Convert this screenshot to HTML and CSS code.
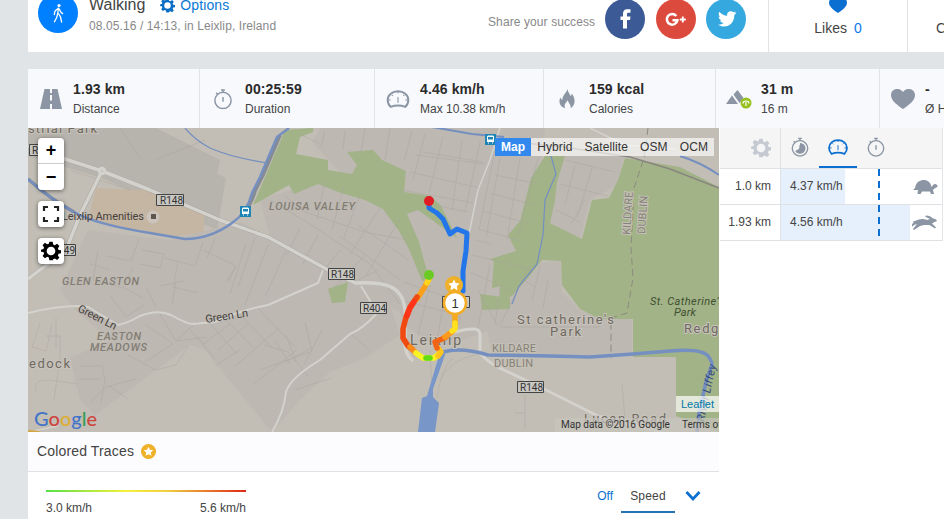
FILE: index.html
```html
<!DOCTYPE html>
<html lang="en">
<head>
    <meta charset="UTF-8">
    <meta name="viewport" content="width=device-width, initial-scale=1.0">
    <title>Walking in Leixlip</title>
    <link rel="stylesheet" href="styles.css">
</head>
<body>
    <svg class="defs">
        <symbol id="gear" viewBox="0 0 24 24"><path fill-rule="evenodd" d="M10 1h4l.6 3.2 2 .8 2.7-1.8 2.8 2.8-1.8 2.7.8 2 3.2.6v3.4l-3.2.6-.8 2 1.8 2.7-2.8 2.8-2.7-1.8-2 .8L14 23h-4l-.6-3.2-2-.8-2.7 1.8L1.900 18l1.800-2.700-.8-2L-.2 12.900V10.600l3.100-.9.800-2L1.900 5l2.800-2.800L7.400 4l2-.8zM12 6.800a5.200 5.200 0 1 0 0 10.400 5.200 5.200 0 0 0 0-10.400z"/></symbol>
        <symbol id="watch" viewBox="0 0 20 22"><g fill="none" stroke="currentColor" stroke-width="1.500"><circle cx="10" cy="12.500" r="8.500"/><path d="M10 4V1.500M8 1.500h4M3 4.500l1.500 1.700M10 9v5"/></g></symbol>
        <symbol id="meter" viewBox="0 0 24 20"><path d="M5 17.500C1 13.500 1.500 8 5 5c4-3.300 10-3.300 14 0 3.500 3 4 8.500 0 12.500-4-1.500-10-1.500-14 0z" fill="none" stroke="currentColor" stroke-width="1.900"/><path d="M12 8v5.500M12 3v1.500M3 11h2M19 11h2M6 6l1 1M18 6l-1 1" fill="none" stroke="currentColor"/></symbol>
        <symbol id="heart" viewBox="0 0 24 21"><path d="M12 20.500C7 17 0 12.500 0 6.500 0 .5 8-2 12 3.500 16-2 24 .5 24 6.500c0 6-7 10.500-12 14z"/></symbol>
        <symbol id="star" viewBox="0 0 20 20"><circle cx="10" cy="10" r="10" fill="#efb02a"/><path d="M10 3.800l1.900 4 4.400.5-3.200 3 .8 4.400-3.900-2.200-3.900 2.200.8-4.400-3.200-3 4.400-.5z" fill="#fff"/></symbol>
    </svg>

    <div class="page">
        <header>
            <div class="activity">
                <svg class="walk" viewBox="0 0 40 40"><circle cx="20" cy="20" r="20" fill="#0080ff"/><circle cx="21" cy="12.500" r="1.600" fill="#fff"/><path d="M20.500 14.500l-.8 6.500M20 15.500l-3 2.500-.8 4M21 15.500l1.800 3.500 2.200 2M19.700 20.500l-1 4-2.500 4.800M20.500 20.500l2 3.500 1.200 5.500" fill="none" stroke="#fff" stroke-width="1.300"/></svg>
                <div class="info">
                    <div class="title"><span>Walking</span><svg><use href="#gear"/></svg><a href="#">Options</a></div>
                    <p>08.05.16 / 14:13, in Leixlip, Ireland</p>
                </div>
                <div class="share">
                    <span>Share your success</span>
                    <svg viewBox="0 0 40 40"><circle cx="20" cy="20" r="20" fill="#3c5a96"/><path d="M18 29.500V21h-2.500v-3.500H18V15c0-3.500 2-4.800 4.500-4.800h3v3.500h-2c-1.200 0-1.500.6-1.500 1.600v2.200h3.500L25 21h-3v8.500z" fill="#fff"/></svg>
                    <svg viewBox="0 0 40 40"><circle cx="20" cy="20" r="20" fill="#db4a3c"/><path d="M20.300 17a5.300 5.300 0 1 0 1.100 4.200H16.500" fill="none" stroke="#fff" stroke-width="2.500"/><path d="M26.800 17.500v6M23.800 20.500h6" stroke="#fff" stroke-width="1.800"/></svg>
                    <svg viewBox="0 0 40 40"><circle cx="20" cy="20" r="20" fill="#35a8e0"/><path d="M30.500 13.800c-.8.4-1.400.5-2.200.6.800-.5 1.300-1.100 1.600-2-.8.4-1.500.7-2.400.9-2.800-2.700-7.100-.2-6.300 3.500-3.300-.2-6-1.600-8-4-1 2-.5 4 1.200 5.200-.6 0-1.200-.2-1.700-.5 0 2 1.200 3.400 3 3.900-.6.2-1.100.2-1.700.1.500 1.500 1.900 2.500 3.600 2.600-1.600 1.300-3.500 1.800-5.600 1.600 7.500 4.500 16.500.2 16.300-9.700.9-.6 1.600-1.300 2.200-2.200z" fill="#fff"/></svg>
                </div>
            </div>
            <div class="likes">
                <svg><use href="#heart"/></svg>
                <p>Likes <span>0</span></p>
            </div>
            <div class="comments">Comments</div>
        </header>

        <section class="stats">
            <div class="stat">
                <svg viewBox="0 0 26 24"><path d="M6.500 2H12v4h2V2h5.500L24 22H14v-5h-2v5H2zM12 8v5.500h2V8z"/></svg>
                <div><b>1.93 km</b><span>Distance</span></div>
            </div>
            <div class="stat">
                <svg class="line"><use href="#watch"/></svg>
                <div><b>00:25:59</b><span>Duration</span></div>
            </div>
            <div class="stat">
                <svg class="line"><use href="#meter"/></svg>
                <div><b>4.46 km/h</b><span>Max 10.38 km/h</span></div>
            </div>
            <div class="stat">
                <svg viewBox="0 0 26 24"><path fill-rule="evenodd" d="M13.500 2c.5 4 2.500 4.500 3 7 1-.7 1.200-1.500 1.200-2.500 4.500 5.500 3.500 12-1 14.800.6-4-2.600-5-2.900-8.300-1.200 2.500-4.500 4.300-2.600 8.300C5.500 19.500 4.500 14.500 6.300 10.500c.6 1.200 1 1.800 2 2.500C8.500 8 11.800 7 13.500 2z"/></svg>
                <div><b>159 kcal</b><span>Calories</span></div>
            </div>
            <div class="stat">
                <svg viewBox="0 0 26 24"><path d="M0 17l6-8.500L12 17zM7.500 7.500l4-4.500 6 8-4 5z"/><circle cx="20" cy="16" r="5.500" fill="#97c11f"/><path d="M17 16.500a3 2.500 0 0 1 6 0M20 19v-4" fill="none" stroke="#fff" stroke-width="1.200"/></svg>
                <div><b>31 m</b><span>16 m</span></div>
            </div>
            <div class="stat">
                <svg class="line"><use href="#heart"/></svg>
                <div><b>-</b><span>Ø Heart rate</span></div>
            </div>
        </section>

        <main>
            <div class="left">
                <div class="map">
                    <svg class="tiles" viewBox="28 128 691 304">
                        <rect x="28" y="128" width="691" height="304" fill="#c2beb5"/>
                        <!-- built-up areas -->
                        <g fill="#bdb8b2">
                            <path fill="#b7b3ad" d="M28 128h128l64 32-3 14 9 4-9 52-115-52-74-22z"/>
                            <path fill="#c5b5a3" d="M96 188l48 2 60 24v18l-34 5-82-17z"/>
                            <path d="M88 230l82 10 70-18 115 58 30 10 15 45-35 23-35 14-30 28-28 32-10-12-57-70-15-5-95 70-15-15-10-42 40-18-35-30-15-20z"/>
                            <path d="M320 128h225l-8 90-26 22 20 14-10 12-15 22-8 40-60 20-30-20-22-42-24-90-50-54z"/>
                            <path d="M562 156h62l-8 30-26 14-10 40-30-18z"/>
                            <path d="M530 264l30-4 2 32 20 20 50 8v36l-140-2-6-30z"/>
                            <path d="M260 200l66-22 70 32 16 40 12 30-8 40-60-30-84-46z"/>
                        </g>
                        <!-- parks -->
                        <g fill="#a2b388">
                            <path d="M285 130l28-2v4l-13 5-4 17 32 6v10l24 4 5-9-10-13 26-2 9 10 24 11-2 21 27 4 10 10 16 32-39-28-11 4 12 28 10 37-7 2-13-32-10-18-16-22-18-9-24-7-23-9-24 10-5-9-36 20z"/>
                            <path d="M545 156h20l-8 26-2 18-5 23 32 16 10-39 17-2 9-18 7-22 55 9 39 20v245l-43-16v-59h-43v-38h-33l-20-10-18-24-1-24-19-1-14 18-16 18-12 5v-18l6-6 2-8-18-10 26-8-8-16 12-14 11-43z"/>
                            <path d="M328 289l20-7-3 20-13 1zM480 294l30 4v11l-28 1zM494 258l30 10-4 14-28 6z"/>
                        </g>
                        <!-- side streets -->
                        <g fill="none" stroke="#aaa49f" stroke-width=".7" opacity=".6">
                            <path d="M98 250l-5 30 30 8 10-20M90 264l20 6M106 256l25 5 8-22M142 250l22 4-4 14-20-4M165 258l30 8 8-24M178 262l-5 25 25 6M203 250l33 16-10 16M215 238l-8 20M236 266l-7 15M246 244l-16 50M255 237l-17 50M268 245l-23 60M286 250l-20 45"/>
                            <path d="M110 295l16 22 18-12M125 288l18 10M146 287l10 20M160 286l24-5M176 281l-4 24M160 314l16 27 22-20M145 324l28 20-28 18M175 341l32-4M128 355l28 15 20-5 12-18M80 366h22l3 14-4 22M79 379h22M90 402l16-15 30-8M108 385l20 14M40 323l-8 24 14 4 6-27M46 336h14v22M56 318v30"/>
                            <path d="M190 330l14 14 26-20M205 318l32 36M220 314l34 34M236 310l36 38M255 305l40 42M195 335l20 24M218 350l30-26M235 366l44-38M252 385l45-35M240 350l-25 16"/>
                            <path d="M270 200l40 24 60 40 30 40M285 196l20 16 60 20 42 8M325 180l-8 40M344 186l-12 44M360 195l-16 42M380 208l-30 46M400 219l-35 58M340 236l60 44M358 225l52 36M300 228l-14 28M318 234l-15 30M340 250l-20 25M365 255l-30 32M378 270l-20 10"/>
                            <path d="M300 134l20 10M325 130l-4 17M345 130l-2 20M365 128l-4 24M390 128l-5 32M412 131l-8 30M425 134l-12 46M443 137l-14 56M462 140l-10 70M480 142l-15 70M495 150l-16 80M415 155l70 9M410 172l70 16M402 190l72 13M435 205l33 7M423 152l60 10"/>
                            <path d="M500 158l-14 80M520 158l-13 82M538 158l-20 78M495 175l44 9M490 193l45 12M483 211l48 13M478 229l44 12M565 160l50 12M560 184l48 12M575 165l-10 40M592 168l-15 50M556 210l24 12M570 225l15-25"/>
                            <path d="M404 282l50 18M400 300l60 15M430 285l-12 50M445 292l-8 50M465 260l-6 65M475 240l16 4M472 255l60 15M470 272l45 20M478 290l20 36M490 264l-12 64M500 288l-5 36M540 266l-8 34M548 280l-5 28M515 275l20 12"/>
                            <path d="M264 345l24 7 20 24M275 340l15 24M286 335l10 27M305 322l7 30M322 330l-18 35M285 362l28-15M260 370l50-18M295 390l36-12M350 333l20 18M525 395v34M515 413h10M622 384l4 48M500 327h100M530 265l-30 60M440 380q10-20 35-25M437 398q4-30 16-40M430 350l2 40"/>
                            <path d="M36 391q-4-12 14-11l28 4M60 358l-6 42M70 170l60 20M120 128l20 30M205 140l-50 20"/>
                        </g>
                        <!-- main roads -->
                        <g fill="none" stroke="#aaa6a1" stroke-width="4.500">
                            <path d="M28 146l40 14 34 11 48 19 70 30 48 17 62 34 25 12"/>
                            <path d="M102 171l-22 44-14 35-38 29"/>
                        </g>
                        <g fill="none" stroke="#d4d2cd" stroke-linejoin="round" stroke-width="3.500">
                            <path d="M28 146l40 14 34 11 48 19 70 30 48 17 62 34 25 12q32-2 42 8t8 30v20q-1 12 8 20"/>
                            <path d="M102 171l-22 44-14 35-38 29"/>
                            <path stroke-width="3" d="M440 338q22-10 35-9 5 1 5 6v18q8 10 26 18l32 15 60 30 70 18"/>
                            <path stroke-width="2" d="M28 313q28-7 50-7l10 1 30 18q10-2 22-9 18-7 31-1 14 8 21 9l23-2q26-12 53-17l50-22 5-13"/>
                            <path stroke-width="2" d="M361 286l8 13 7 15q-12 14-26 20l-30 26q-30 18-34 32-2 20-14 40"/>
                            <path stroke-width="1.500" d="M500 128l-10 32-12 30-9 44M590 128l35 17 50 4M28 432l30-6"/>
                            <circle cx="102" cy="171" r="2.500" fill="#aaa"/>
                        </g>
                        <path d="M28 430q8 0 14 2H28z" fill="#d0a544"/>
                        <path d="M500 140l70 8 60 9 40 12 49 19" fill="none" stroke="#88857f" stroke-width="1.500"/>
                        <path d="M648 128l-4 30-10 30-3 60 2 30-6 35-16 5v40" fill="none" stroke="#8d8b7e" stroke-width="1" stroke-dasharray="7 4"/>
                        <!-- water -->
                        <g fill="none" stroke="#748fc0">
                            <path stroke="#858b92" stroke-width="3.500" d="M28 179q22 20 46 33M241 215q10-9 14-24l8-16 17-40"/>
                            <path stroke-width="2.500" d="M28 179q22 20 46 33 20 12 76 21l35 6q25 0 47-16 15-10 20-30l8-16 17-40 12-9"/>
                            <path stroke-width="1.200" d="M185 128q10 12 25 20 20 9 57 15M551 156l5 18-11 26-2 35-6 29-18 22-7 18"/>
                            <path stroke-width="2" d="M432 127l40 7 32 3M680 156q20 6 39 19"/>
                            <path stroke-width="3.500" d="M443 352q18-5 45 3l62 1 40 1 43-3 37-3q32-3 38 5t3 11l-5 15-7 30-2 20"/>
                        </g>
                        <path d="M440 352h6l-13 37v8l6 6-4 29h-17l4-34 5-2z" fill="#7896c8"/>
                        <!-- place names -->
                        <g class="place">
                            <text x="28" y="133" textLength="69">strial Park</text>
                            <text x="29" y="368" textLength="41">edock</text>
                            <text x="410" y="345" font-size="14" textLength="51">Leixlip</text>
                            <text x="517" y="324" textLength="97">St catherine's</text>
                            <text x="550" y="336" textLength="31">Park</text>
                            <text x="684" y="333" textLength="52">Redgap</text>
                            <text x="584" y="423" textLength="82">Lucan Road</text>
                        </g>
                        <g class="district">
                            <text x="269" y="210" textLength="86">LOUISA VALLEY</text>
                            <text x="62" y="285" textLength="77">GLEN EASTON</text>
                            <text x="97" y="340" textLength="44">EASTON</text>
                            <text x="90" y="351" textLength="57">MEADOWS</text>
                        </g>
                        <g class="county">
                            <text x="492" y="352" textLength="44">KILDARE</text>
                            <text x="494" y="367" textLength="39">DUBLIN</text>
                            <text transform="translate(630 235) rotate(-86)" textLength="43">KILDARE</text>
                            <text transform="translate(645 234) rotate(-86)" textLength="38">DUBLIN</text>
                        </g>
                        <g class="label">
                            <text x="62" y="220" textLength="82">Leixlip Amenities</text>
                            <text transform="translate(77 311) rotate(27)" textLength="42">Green Ln</text>
                            <text transform="translate(206 323) rotate(-9)" textLength="43">Green Ln</text>
                            <text class="park" x="650" y="305" textLength="74">St. Catherine's</text>
                            <text class="park" x="674" y="316" textLength="22">Park</text>
                            <text class="river" transform="translate(704 422) rotate(-78)" textLength="58">River Liffey</text>
                        </g>
                        <circle cx="153" cy="217" r="6.500" fill="#cbc5bd"/>
                        <path d="M151 214h5v5h-5z" fill="#5d574f"/>
                        <g class="shield">
                            <path d="M156.500 194.500h27v11h-27zM328.500 268.500h26v11h-26zM360.500 302.500h26v11h-26zM517.500 381.500h26v11h-26zM29.500 144.500h27v11h-27zM49.500 244.500h26v11h-26zM442.500 296.500h27v11h-27z"/>
                            <text x="160" y="204">R148</text>
                            <text x="331" y="278">R148</text>
                            <text x="363" y="312">R404</text>
                            <text x="520" y="391">R148</text>
                            <text x="32" y="154">R148</text>
                            <text x="52" y="254">R449</text>
                        </g>
                        <g id="bus" transform="translate(240 206)"><path d="M0 0h11v11H0z" fill="#1d86b4"/><path d="M3 1.500h5l1 1V8H2V2.500zM3 8.500h1v1H3zM7 8.500h1v1H7z" fill="#fff"/><path d="M3 3h5v2.500H3z" fill="#1d86b4"/></g>
                        <use href="#bus" x="245" y="-72"/>
                        <!-- walked route -->
                        <g fill="none" stroke-linecap="round" stroke-linejoin="round" stroke-width="5.500">
                            <path stroke="#2376ea" stroke-width="5" d="M429 203v5l8 5 6 6 7 15 7-5 10 4-1 18-3 20v20"/>
                            <path stroke="#f9a01b" d="M429 279l-5 9-7 11"/>
                            <path stroke="#ffd51e" d="M429 279l-2 4"/>
                            <path stroke="#f04a10" d="M417 297l-7 10-4 10-3 12v9l5 8 4 3"/>
                            <path stroke="#ff351a" d="M414 302l-4 6-3 8"/>
                            <path stroke="#fa8a1a" d="M410 347l6 6"/>
                            <path stroke="#f8f422" d="M416 353l7 5 11 0 5-4"/>
                            <path stroke="#60dd15" d="M426 358h4"/>
                            <path stroke="#ffc51f" d="M438 356l3-4-4-5"/>
                            <path stroke="#f36516" d="M437 348l-2-6 7-3 4-2"/>
                            <path stroke="#fb9a1b" d="M445 337l8-6"/>
                            <path stroke="#f9a91c" d="M455 310v15"/>
                            <path stroke="#ffe11f" d="M455 323v6l-3 2"/>
                        </g>
                        <circle cx="429" cy="201" r="5" fill="#e01b22"/>
                        <circle cx="429" cy="275" r="5" fill="#6bcb24"/>
                        <use href="#star" x="445" y="276" width="18" height="18"/>
                        <circle cx="455" cy="303" r="11" fill="#fff" stroke="#f4ac24" stroke-width="2.500"/>
                        <text class="pin" x="455" y="308">1</text>
                    </svg>
                    <div class="controls">
                        <div class="zoom"><button>+</button><button>−</button></div>
                        <button><svg viewBox="0 0 18 18"><path d="M2 6V2h4M12 2h4v4M16 12v4h-4M6 16H2v-4" fill="none" stroke="#222" stroke-width="2.200"/></svg></button>
                        <button><svg class="settings"><use href="#gear"/></svg></button>
                    </div>
                    <nav class="layers">
                        <a class="active">Map</a><a>Hybrid</a><a>Satellite</a><a>OSM</a><a>OCM</a>
                    </nav>
                    <div class="google"><i class="b">G</i><i class="r">o</i><i class="y">o</i><i class="b">g</i><i class="g">l</i><i class="r">e</i></div>
                    <div class="leaflet">Leaflet</div>
                    <div class="copyright"><span>Map data ©2016 Google</span><span>Terms of Use</span></div>
                </div>
                <div class="traces">Colored Traces <svg><use href="#star"/></svg></div>
                <div class="legend">
                    <div class="scale">
                        <div class="gradient"></div>
                        <p><span>3.0 km/h</span><span>5.6 km/h</span></p>
                    </div>
                    <nav>
                        <a>Off</a>
                        <a class="active">Speed</a>
                        <svg viewBox="0 0 16 12"><path d="M1.500 2L8 9l6.500-7" fill="none" stroke="#0a6fd0" stroke-width="2.700"/></svg>
                    </nav>
                </div>
            </div>

            <div class="splits">
                <div class="row head">
                    <div class="km"><svg><use href="#gear"/></svg></div>
                    <div class="tabs">
                        <a><svg viewBox="0 0 20 22"><use href="#watch" width="20" height="22"/><path d="M10 12.500V6.500a6 6 0 1 1-5.200 9z" fill="#8b95a3"/></svg></a>
                        <a class="active"><svg><use href="#meter"/></svg></a>
                        <a><svg><use href="#watch"/></svg></a>
                    </div>
                </div>
                <div class="row">
                    <div class="km">1.0 km</div>
                    <div class="speed">
                        <div class="bar" style="width: 64px">4.37 km/h</div>
                        <svg viewBox="0 0 26 18"><path d="M1 12l2-2C4 4 8 2 12 2s7 3 7.500 7l2-2.500c1.500-1.300 4.500 0 4 2.500-2 1-3 1-4.500 3l1 4h-3l-1-2.500h-8L8.500 16h-3l.5-4z"/></svg>
                    </div>
                </div>
                <div class="row">
                    <div class="km">1.93 km</div>
                    <div class="speed">
                        <div class="bar" style="width: 129px">4.56 km/h</div>
                        <svg viewBox="0 0 26 18"><path d="M1 7.500l2-.5c4-2 8-3 12-1l3-1-5-2.500 1-1c3 0 5 1 7 3 2 0 3.500 1 4 2.500l-3.500 1.500-1.500 1 4 4-1 1-5.500-3.500-5.500 0-4 1-6 4-1-1 4-5-3 1-3 2.500-1-1 3.500-4z"/></svg>
                    </div>
                </div>
                <div class="average"></div>
            </div>
        </main>
    </div>
</body>
</html>
```

FILE: styles.css
```css
* {
    box-sizing: border-box;
}
body {
    margin: 0;
    height: 519px;
    overflow: hidden;
    background: #e0e4e7;
    font-family: "Liberation Sans", Arial, sans-serif;
    font-size: 12px;
    color: #444;
}
p {
    margin: 0;
}
.defs {
    display: none;
}
.page {
    margin-left: 28px;
    overflow: hidden;
}
header {
    display: grid;
    grid-template-columns: 741px 139px 36px;
    height: 59px;
    margin-top: -7px;
    background: white;
}
.activity {
    display: flex;
    padding-left: 10px;
    border-right: 1px solid #e0e4e7;
}
.walk {
    width: 40px;
    height: 40px;
}
.info {
    width: 408px;
    padding: 2px 0 0 11px;
    color: #888;
    letter-spacing: 0.1px;
}
.title {
    display: flex;
    align-items: center;
    height: 20px;
    margin-bottom: 4px;
    font-size: 16px;
    letter-spacing: 0;
    color: #444;
}
.title svg {
    width: 15px;
    height: 15px;
    margin: 0 5px 0 15px;
    fill: #0a6fc4;
}
.title a {
    font-size: 14px;
    color: #0a78d4;
    text-decoration: none;
    letter-spacing: 0.1px;
}
.share {
    display: flex;
    align-items: center;
    gap: 11px;
    height: 52px;
    color: #888;
}
.share span {
    width: 107px;
    margin: 5px -1px 0 2px;
    letter-spacing: 0.1px;
    white-space: nowrap;
}
.share svg {
    width: 40px;
    height: 40px;
}
.share svg:last-child {
    margin-left: -1px;
}
.likes {
    display: flex;
    flex-direction: column;
    align-items: center;
    padding-top: 4px;
    border-right: 1px solid #e0e4e7;
    font-size: 14px;
}
.likes svg {
    width: 18px;
    height: 17px;
    margin-bottom: 6px;
    fill: #0a6fd0;
}
.likes span {
    margin-left: 3px;
    color: #0a78e8;
}
.comments {
    padding: 27px 0 0 28px;
    font-size: 14px;
}
.stats {
    display: grid;
    grid-template-columns: 172px 175px 169px 172px 164px 64px;
    height: 59px;
    margin-top: 17px;
    background: #f7f9fc;
}
.stat {
    display: flex;
    align-items: center;
    gap: 9px;
    padding: 1px 0 0 10px;
    border-right: 1px solid #e0e4e7;
    white-space: nowrap;
}
.stat:last-child {
    border-right: 0;
}
.stat svg {
    flex-shrink: 0;
    width: 26px;
    height: 24px;
    fill: #8b95a3;
    color: #8b95a3;
}
.stat svg.line {
    padding: 1.5px 0;
}
.stat b {
    display: block;
    margin-bottom: 5px;
    font-size: 14px;
    line-height: 15px;
    letter-spacing: 0.1px;
    color: #2b2b2b;
}
.stat span {
    display: block;
    line-height: 14px;
}
main {
    display: flex;
    background: white;
}
.left {
    width: 691px;
}
.map {
    position: relative;
    height: 304px;
    overflow: hidden;
    font-family: Roboto, sans-serif;
}
.tiles {
    display: block;
    width: 691px;
    height: 304px;
}
.place {
    font-size: 13px;
    fill: #6f6962;
    stroke: #c8c4bc;
    stroke-width: 2px;
    paint-order: stroke;
}
.district {
    font-size: 11px;
    font-style: italic;
    font-weight: 500;
    fill: #837d74;
}
.county {
    font-size: 11px;
    fill: #85817a;
    stroke: #c5c1b6;
    stroke-width: 2px;
    paint-order: stroke;
}
.label {
    font-size: 11px;
    fill: #45413c;
}
.park {
    font-style: italic;
    fill: #3f4f30;
}
.river {
    font-style: italic;
    fill: #30477c;
}
.shield {
    font-size: 10px;
    fill: #333;
}
.shield path {
    fill: #c9c7c2;
    stroke: #444;
}
.pin {
    font-family: "Liberation Sans", Arial, sans-serif;
    font-size: 13px;
    text-anchor: middle;
    fill: #333;
}
.controls {
    position: absolute;
    top: 10px;
    left: 10px;
    display: flex;
    flex-direction: column;
    gap: 11px;
}
.controls button {
    display: flex;
    align-items: center;
    justify-content: center;
    width: 26px;
    height: 26px;
    padding: 0;
    border: 0;
    border-radius: 4px;
    background: white;
    box-shadow: 0 1px 4px rgba(0, 0, 0, 0.5);
    font: bold 18px "Liberation Sans", Arial, sans-serif;
    color: black;
}
.controls .zoom {
    border-radius: 4px;
    box-shadow: 0 1px 4px rgba(0, 0, 0, 0.5);
}
.controls .zoom button {
    box-shadow: none;
}
.controls .zoom button:first-child {
    border-bottom: 1px solid #ccc;
    border-radius: 4px 4px 0 0;
}
.controls .zoom button:last-child {
    border-radius: 0 0 4px 4px;
}
.controls svg {
    width: 18px;
    height: 18px;
}
.controls .settings {
    width: 20px;
    height: 20px;
}
.layers {
    position: absolute;
    top: 10px;
    right: 5px;
    display: flex;
    background: rgba(255, 255, 255, 0.65);
    font: 12px/18px "Liberation Sans", Arial, sans-serif;
    letter-spacing: 0.1px;
    color: #333;
}
.layers a {
    padding: 0 6px;
}
.layers .active {
    background: #3388ee;
    font-weight: bold;
    color: white;
}
.google {
    position: absolute;
    left: 6px;
    bottom: 2px;
    font: 500 20px/24px Lato, sans-serif;
}
.google i {
    font-style: normal;
}
.google .b {
    color: #4374c8;
}
.google .r {
    color: #cf4540;
}
.google .y {
    color: #dfad32;
}
.google .g {
    color: #389c55;
}
.leaflet {
    position: absolute;
    right: 0;
    bottom: 20px;
    padding: 0 5px;
    background: rgba(255, 255, 255, 0.7);
    font: 11px/16px "Liberation Sans", Arial, sans-serif;
    color: #0078a8;
}
.copyright {
    position: absolute;
    left: 527px;
    bottom: 0;
    display: flex;
    gap: 12px;
    padding-left: 6px;
    background: rgba(200, 197, 190, 0.7);
    font-size: 10px;
    line-height: 14px;
    color: #333;
    white-space: nowrap;
}
.traces {
    display: flex;
    align-items: center;
    gap: 7px;
    height: 40px;
    padding: 0 0 1px 9px;
    border-bottom: 1px solid #dfe2e5;
    background: #fcfcfe;
    font-size: 14px;
    letter-spacing: 0.15px;
}
.traces svg {
    width: 15px;
    height: 15px;
}
.legend {
    display: flex;
    justify-content: space-between;
    height: 47px;
    padding: 0 18px;
}
.scale {
    width: 200px;
    padding-top: 18px;
}
.gradient {
    height: 2px;
    margin-bottom: 9px;
    background: linear-gradient(to right, #55e045, #f5f03c 40%, #f0d040 60%, #e02818);
}
.scale p {
    display: flex;
    justify-content: space-between;
}
.legend nav {
    display: flex;
    height: 41px;
    line-height: 48px;
}
.legend a {
    color: #0a6fd0;
}
.legend .active {
    width: 54px;
    margin: 0 10px 0 8px;
    border-bottom: 2px solid #2374b5;
    text-align: center;
    letter-spacing: 0.2px;
    color: #444;
}
.legend svg {
    width: 16px;
    height: 12px;
    margin-top: 18px;
}
.splits {
    position: relative;
    width: 224px;
    border-left: 1px solid white;
    border-right: 1px solid #e3e5e8;
    height: 113px;
}
.row {
    display: flex;
    height: 36px;
    border-bottom: 1px solid #dfe2e5;
}
.head {
    height: 41px;
    background: #f5f5f5;
}
.km {
    display: flex;
    align-items: center;
    justify-content: flex-end;
    width: 61px;
    padding: 0 9px 1px 0;
    border-right: 1px solid #dfe2e5;
}
.km svg {
    width: 20px;
    height: 20px;
    fill: #c5cad2;
}
.tabs {
    display: flex;
}
.tabs a {
    display: flex;
    align-items: center;
    justify-content: center;
    width: 38px;
    border-bottom: 2px solid transparent;
    color: #8b95a3;
}
.tabs .active {
    border-color: #0a6fd0;
    color: #0a6fd0;
}
.tabs svg {
    width: 22px;
    height: 20px;
}
.speed {
    display: flex;
    flex: 1;
    align-items: center;
    justify-content: space-between;
    padding-right: 4px;
}
.bar {
    height: 100%;
    padding-left: 9px;
    background: #e6f0fd;
    line-height: 34px;
}
.speed svg {
    width: 26px;
    height: 18px;
    fill: #8b95a3;
}
.average {
    position: absolute;
    top: 41px;
    left: 158px;
    width: 2px;
    height: 69px;
    background: repeating-linear-gradient(#0a6fd0 0 7px, transparent 7px 12px);
}
```
